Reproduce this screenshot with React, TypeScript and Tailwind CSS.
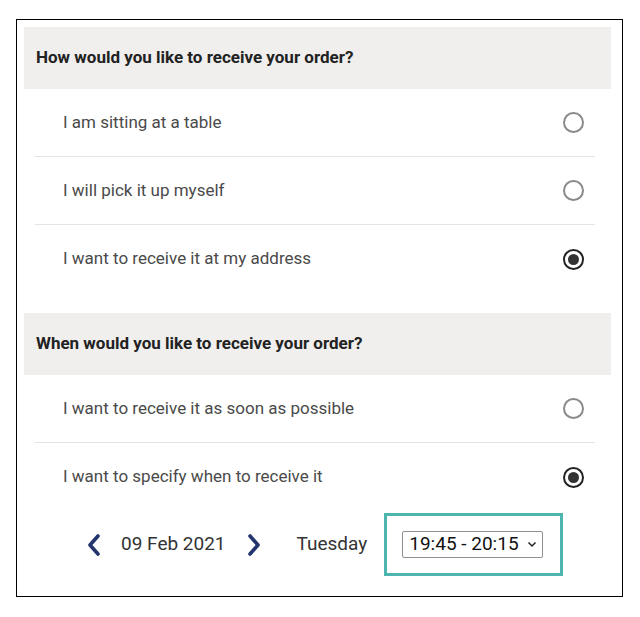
import React from "react"

type Option = { label: string; checked: boolean }

const deliveryOptions: Option[] = [
  { label: "I am sitting at a table", checked: false },
  { label: "I will pick it up myself", checked: false },
  { label: "I want to receive it at my address", checked: true },
]

const timeOptions: Option[] = [
  { label: "I want to receive it as soon as possible", checked: false },
  { label: "I want to specify when to receive it", checked: true },
]

function Radio({ checked }: { checked: boolean }) {
  if (checked) {
    return (
      <span className="flex h-[21px] w-[21px] items-center justify-center rounded-full border-2 border-[#222]">
        <span className="h-[11px] w-[11px] rounded-full bg-[#333]" />
      </span>
    )
  }
  return <span className="h-[21px] w-[21px] rounded-full border-2 border-[#8a8a8a]" />
}

function OptionList({ options }: { options: Option[] }) {
  return (
    <ul className="ml-[11px] mr-[16px]">
      {options.map((opt, i) => (
        <li
          key={opt.label}
          className={
            "flex h-[68px] items-center justify-between pl-[28px] pr-[11px] " +
            (i < options.length - 1 ? "border-b border-[#e4e4e4]" : "")
          }
        >
          <span className="text-[17px] text-[#4a4a4a]">{opt.label}</span>
          <Radio checked={opt.checked} />
        </li>
      ))}
    </ul>
  )
}

function Header({ children }: { children: React.ReactNode }) {
  return (
    <div className="flex h-[62px] items-center bg-[#f0efee] pl-[12px]">
      <h2 className="text-[17px] font-bold text-[#222]">{children}</h2>
    </div>
  )
}

function Chevron({ dir }: { dir: "left" | "right" }) {
  return (
    <svg width="14" height="22" viewBox="0 0 14 22" fill="none">
      <polyline
        points={dir === "left" ? "11,2 3,11 11,20" : "3,2 11,11 3,20"}
        stroke="#23346e"
        strokeWidth="3.6"
        strokeLinecap="round"
        strokeLinejoin="round"
      />
    </svg>
  )
}

export default function App() {
  return (
    <div className="min-h-[617px] bg-white pt-[19px] pl-[16px]" style={{ fontFamily: "Roboto, 'Liberation Sans', sans-serif" }}>
      <div className="h-[578px] w-[607px] border border-black pt-[7px] pl-[7px] pr-[11px]">
        <Header>How would you like to receive your order?</Header>
        <OptionList options={deliveryOptions} />

        <div className="mt-[20px]">
          <Header>When would you like to receive your order?</Header>
        </div>
        <OptionList options={timeOptions} />

        {/* Date / time picker */}
        <div className="mt-[2px] flex items-center pl-[63px]">
          <button className="flex items-center">
            <Chevron dir="left" />
          </button>
          <span className="ml-[20px] text-[19px] text-[#333]">09 Feb 2021</span>
          <button className="ml-[21px] flex items-center">
            <Chevron dir="right" />
          </button>
          <span className="ml-[36px] text-[19px] text-[#333]">Tuesday</span>
          <div className="ml-[17px] flex h-[63px] w-[179px] items-center border-[3px] border-[#4bb5ae] pl-[15px]">
            <div className="flex h-[27px] w-[141px] items-center justify-between rounded-[2px] border border-[#8f8f8f] pl-[6px] pr-[5px]">
              <span className="text-[19px] text-[#111]">19:45 - 20:15</span>
              <svg width="10" height="7" viewBox="0 0 10 7" fill="none">
                <polyline points="1.5,1.5 5,5 8.5,1.5" stroke="#222" strokeWidth="1.5" />
              </svg>
            </div>
          </div>
        </div>
      </div>
    </div>
  )
}
